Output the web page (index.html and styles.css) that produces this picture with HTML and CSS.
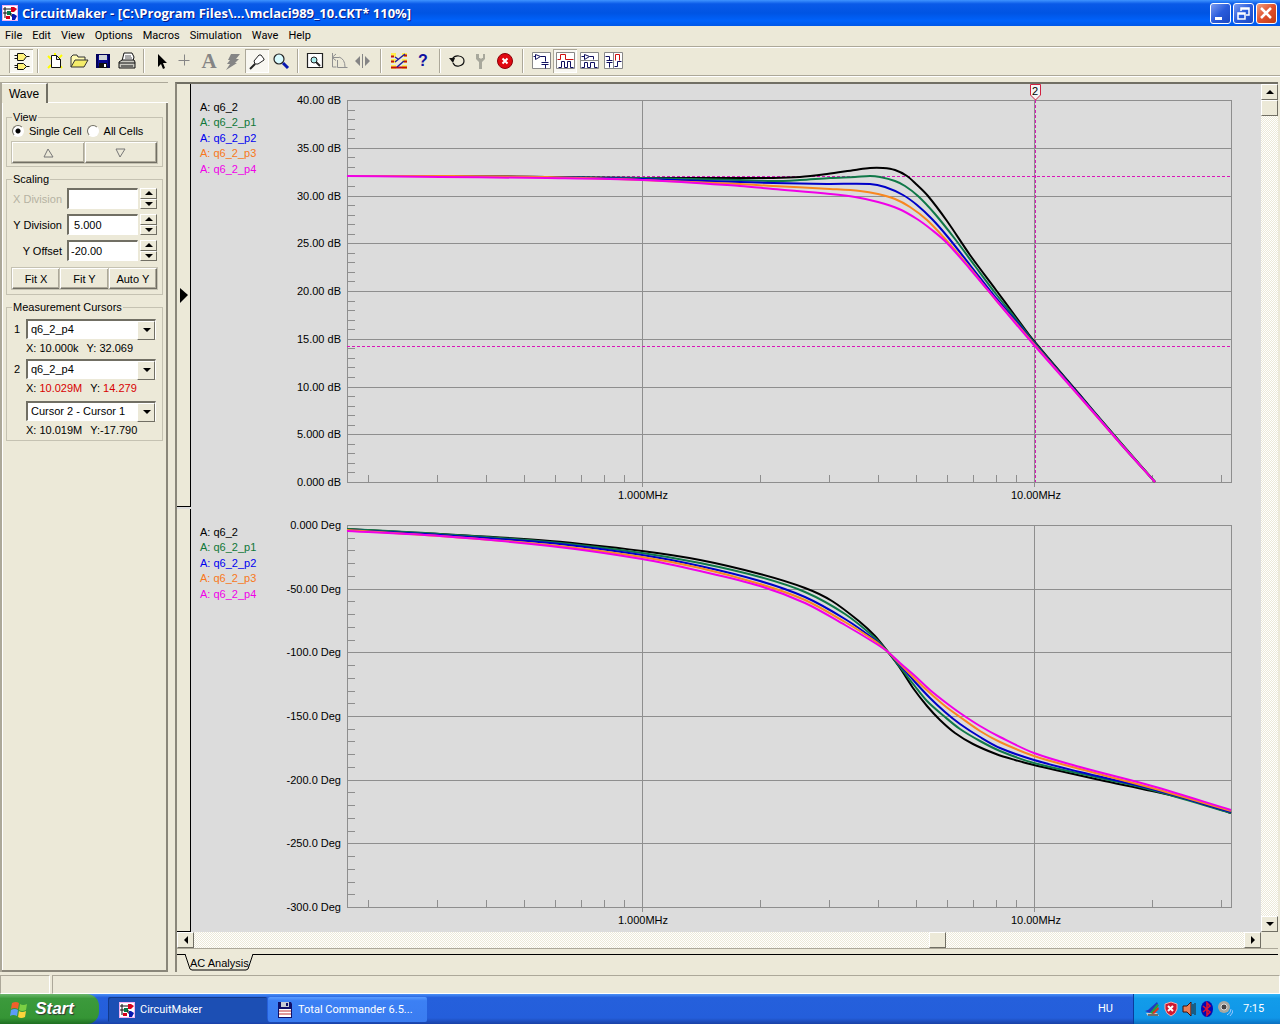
FILE: index.html
```html
<!DOCTYPE html>
<html lang="en">
<head>
    <meta charset="UTF-8">
    <meta name="viewport" content="width=device-width, initial-scale=1.0">
    <title>CircuitMaker</title>
    <link rel="stylesheet" href="styles.css">
</head>
<body>
    <!-- shared icons -->
    <svg class="defs" width="0" height="0" aria-hidden="true">
        <symbol id="app-icon" viewBox="0 0 16 16">
            <rect width="16" height="16" fill="#f0b0f0"/>
            <rect x="1" y="1" width="14" height="14" fill="#fff"/>
            <path d="M1 4h9M3 2v11M1 8h6" stroke="#111" fill="none"/>
            <path d="M9 2h3l3 2-3 3H9z" fill="#d8001c"/>
            <path d="M5 6h4v4H5z" fill="#087a48"/>
            <path d="M4 11h4v3H4z" fill="#d8001c"/>
            <path d="M9 8v3h2" stroke="#111" fill="none"/>
            <path d="M10 9h2l3 2-2 4h-3z" fill="#0818b0"/>
        </symbol>
        <symbol id="arrow-up" viewBox="0 0 8 4"><path d="M0 4l4-4 4 4z"/></symbol>
        <symbol id="arrow-down" viewBox="0 0 8 4"><path d="M0 0h8L4 4z"/></symbol>
    </svg>

    <header class="title-bar">
        <svg class="app-icon" width="16" height="16"><use href="#app-icon"/></svg>
        <h1>CircuitMaker - [C:\Program Files\...\mclaci989_10.CKT* 110%]</h1>
        <div class="window-buttons">
            <button aria-label="Minimize"><svg width="19" height="19"><path d="M4 13h7v3H4z" fill="#fff"/></svg></button>
            <button aria-label="Restore"><svg width="19" height="19"><path d="M7 7V4h8v7h-3M7 5h8M4 9h7v6H4zM4 10h7" fill="none" stroke="#fff" stroke-width="1.5"/></svg></button>
            <button class="close" aria-label="Close"><svg width="19" height="19"><path d="M4 4l10 10M14 4L4 14" stroke="#fff" stroke-width="2.5"/></svg></button>
        </div>
    </header>

    <nav class="menu-bar">
        <a href="#">File</a>
        <a href="#">Edit</a>
        <a href="#">View</a>
        <a href="#">Options</a>
        <a href="#">Macros</a>
        <a href="#">Simulation</a>
        <a href="#">Wave</a>
        <a href="#">Help</a>
    </nav>

    <div class="toolbar">
        <button class="pressed" aria-label="Parts">
            <svg width="24" height="24" viewBox="0.5 0.5 24 24"><path d="M9 5h6l3 3-3 4H9zM9 15h6l3 3-3 3H9z" fill="#fff27a" stroke="#111"/><path d="M6 7h3M6 10h3M18 8h3M6 17h3M6 19h3M18 18h3" stroke="#111"/></svg>
        </button>
        <span class="sep"></span>
        <button aria-label="New">
            <svg width="24" height="24"><path d="M5 7l3 3M5 19l3-3M12 4v2M19 6l-3 3M19 19l-3-3" stroke="#ff0" stroke-width="2"/><path d="M8.500 6.500h5l4 4v8h-9zM13.500 6.500v4h4" fill="#fff" stroke="#111"/></svg>
        </button>
        <button aria-label="Open">
            <svg width="24" height="24"><path d="M4 18V8l2-2h4l1 2h7v3" fill="#fffbb0" stroke="#333"/><path d="M4 18l4-7h13l-4 7z" fill="#f4ec6a" stroke="#333"/></svg>
        </button>
        <button aria-label="Save">
            <svg width="24" height="24"><path d="M6 6h12v12H6z" fill="#0a0a90" stroke="#00005a" stroke-width="2"/><path d="M8 6h8v5H8z" fill="#cfd4d8"/><path d="M8 14h8v5H8z" fill="#111"/><path d="M13 15h2v3h-2z" fill="#fff"/></svg>
        </button>
        <button aria-label="Print">
            <svg width="24" height="24"><path d="M7 12l2-8h8l2 4-1 4" fill="#fff" stroke="#111"/><path d="M10 7h6M10 9h7" stroke="#555"/><path d="M4 13l3-2h12l1 2v6H4z" fill="#c8c8c0" stroke="#111"/><path d="M4 14h16M6 17h12" stroke="#111"/></svg>
        </button>
        <span class="sep"></span>
        <button aria-label="Arrow">
            <svg width="24" height="24"><path d="M9 5v13l3-3 2 5 2-1-2-5h4z" fill="#000"/></svg>
        </button>
        <button aria-label="Wire">
            <svg width="24" height="24" viewBox="0.5 0.5 24 24"><path d="M6 12h11M12 6v11" stroke="#858585"/></svg>
        </button>
        <button aria-label="Text" class="text-tool">A</button>
        <button aria-label="Delete">
            <svg width="24" height="24"><path d="M10 5h9l-4 5h3l-4 4h2l-11 7 4-6H6l3-4H7z" fill="#858585"/></svg>
        </button>
        <button class="pressed" aria-label="Probe">
            <svg width="24" height="24"><path d="M5 20l5-5" stroke="#222" stroke-width="2"/><path d="M10 15l-1-3 5-6h2l3 4v1l-6 4z" fill="#fff" stroke="#222"/></svg>
        </button>
        <button aria-label="Zoom">
            <svg width="24" height="24"><circle cx="10" cy="10" r="5" fill="#d8fbff" stroke="#222" stroke-width="1.2"/><path d="M14 14l5 5" stroke="#0818b0" stroke-width="3"/></svg>
        </button>
        <span class="sep"></span>
        <button aria-label="Fit to window">
            <svg width="24" height="24"><path d="M4.500 4.500h15v14h-15z" fill="#fff" stroke="#222" stroke-width="1.2"/><circle cx="11" cy="11" r="3" fill="#aee" stroke="#222"/><path d="M13 13l4 4" stroke="#222" stroke-width="2"/></svg>
        </button>
        <button aria-label="Rotate">
            <svg width="24" height="24"><path d="M5.500 4v14h4M5 8.500h7M9 5L5 8.500l4 3M12 8q6 2 6 10M10.500 11v7.500h10" fill="none" stroke="#909090"/></svg>
        </button>
        <button aria-label="Mirror">
            <svg width="24" height="24"><path d="M9 7v10l-5-5zM14 7v10l5-5z" fill="#858585"/><path d="M11.500 5v14" stroke="#858585"/></svg>
        </button>
        <span class="sep wide"></span>
        <button aria-label="Simulation traces">
            <svg width="24" height="24"><path d="M4 6h5M4 12h5M4 18h5M15 6h5M15 12h5M15 18h5" stroke="#fff04c" stroke-width="4"/><path d="M4 7.500h3M4 12.500h3M4 18.500h14M17 6.500h3M17 12.500h3M17 18.500h3" stroke="#c01010" stroke-width="2"/><path d="M8 13l10-8M8 8l3 2M10 18l7-6" fill="none" stroke="#2020a0" stroke-width="1.5"/></svg>
        </button>
        <button aria-label="Help" class="help-tool">?</button>
        <span class="sep"></span>
        <button aria-label="Reset">
            <svg width="24" height="24"><path d="M7 10q3-4 7-3 5 1 5 5t-5 5q-4 1-6-3" fill="none" stroke="#111" stroke-width="1.2"/><path d="M4 9h6l-2 5z" fill="#111"/></svg>
        </button>
        <button aria-label="Setup">
            <svg width="24" height="24"><path d="M7 5v5l3 3v7h3v-7l3-3V5h-2v4h-1l-1 1-1-1h-1V5z" fill="#a8a89c"/></svg>
        </button>
        <button aria-label="Stop">
            <svg width="24" height="24"><circle cx="12" cy="12" r="7.500" fill="#e00810" stroke="#8a0008"/><path d="M9.500 9.500l5 5M14.500 9.500l-5 5" stroke="#fff" stroke-width="2"/></svg>
        </button>
        <span class="sep wide"></span>
        <button aria-label="Schematic">
            <svg width="24" height="24" viewBox="0.5 0.5 24 24"><path d="M4 4h18v16H4z" fill="#fff" stroke="#888"/><path d="M5 8h2m5 0h5v5M7 6v5l5-3zM13 14h7M13 16h7M17 16v4" fill="none" stroke="#101060"/></svg>
        </button>
        <button class="pressed" aria-label="Waveforms">
            <svg width="24" height="24" viewBox="0.5 0.5 24 24"><path d="M4 4h18v16H4z" fill="#fff" stroke="#888"/><path d="M5 11h3V6h5v5h8" fill="none" stroke="#d01010"/><path d="M6 19h3v-6h3v6h3v-6h3v6h3" fill="none" stroke="#101060"/></svg>
        </button>
        <button aria-label="Split horizontally">
            <svg width="24" height="24" viewBox="0.5 0.5 24 24"><path d="M4 4h18v16H4zM4 12h18" fill="#fff" stroke="#888"/><path d="M5 8h3m5 0h4v3M8 6v5l5-3zM5 19h3v-5h3v5h3v-5h4v5h3" fill="none" stroke="#101060"/></svg>
        </button>
        <button aria-label="Split vertically">
            <svg width="24" height="24" viewBox="0.5 0.5 24 24"><path d="M4 4h18v16H4zM13 4v16" fill="#fff" stroke="#888"/><path d="M5 8h4v4M6 12h6M6 14h6M9 14v5M14 18h3v-5h4" fill="none" stroke="#101060"/><path d="M15 12V6h4v6" fill="none" stroke="#d01010"/></svg>
        </button>
    </div>

    <main class="workspace">
        <aside class="sidebar">
            <div class="side-tabs"><button class="side-tab">Wave</button></div>
            <form class="side-page">
                <fieldset class="group view-group">
                    <legend>View</legend>
                    <div class="radios">
                        <label><input type="radio" name="cells" checked>Single Cell</label>
                        <label><input type="radio" name="cells">All Cells</label>
                    </div>
                    <div class="button-row">
                        <button type="button" aria-label="Previous cell"><svg width="11" height="10"><path d="M1 9l4-8 5 8z" fill="none" stroke="#777"/></svg></button>
                        <button type="button" aria-label="Next cell"><svg width="11" height="10"><path d="M1 1h9L5 9z" fill="none" stroke="#777"/></svg></button>
                    </div>
                </fieldset>

                <fieldset class="group scaling-group">
                    <legend>Scaling</legend>
                    <div class="field disabled">
                        <label for="xDivision">X Division</label>
                        <input type="text" id="xDivision" disabled>
                        <span class="spin">
                            <button type="button" aria-label="Increase X"><svg width="8" height="4"><use href="#arrow-up"/></svg></button>
                            <button type="button" aria-label="Decrease X"><svg width="8" height="4"><use href="#arrow-down"/></svg></button>
                        </span>
                    </div>
                    <div class="field">
                        <label for="yDivision">Y Division</label>
                        <input type="text" id="yDivision" value=" 5.000">
                        <span class="spin">
                            <button type="button" aria-label="Increase Y"><svg width="8" height="4"><use href="#arrow-up"/></svg></button>
                            <button type="button" aria-label="Decrease Y"><svg width="8" height="4"><use href="#arrow-down"/></svg></button>
                        </span>
                    </div>
                    <div class="field">
                        <label for="yOffset">Y Offset</label>
                        <input type="text" id="yOffset" value="-20.00">
                        <span class="spin">
                            <button type="button" aria-label="Increase offset"><svg width="8" height="4"><use href="#arrow-up"/></svg></button>
                            <button type="button" aria-label="Decrease offset"><svg width="8" height="4"><use href="#arrow-down"/></svg></button>
                        </span>
                    </div>
                    <div class="button-row">
                        <button type="button">Fit X</button>
                        <button type="button">Fit Y</button>
                        <button type="button">Auto Y</button>
                    </div>
                </fieldset>

                <fieldset class="group cursor-group">
                    <legend>Measurement Cursors</legend>
                    <div class="cursor-row">
                        <label for="cursor1">1</label>
                        <span class="select"><select id="cursor1"><option>q6_2_p4</option></select></span>
                    </div>
                    <p class="reading"><span>X: 10.000k</span><span>Y: 32.069</span></p>
                    <div class="cursor-row">
                        <label for="cursor2">2</label>
                        <span class="select"><select id="cursor2"><option>q6_2_p4</option></select></span>
                    </div>
                    <p class="reading"><span>X: <b>10.029M</b></span><span>Y: <b>14.279</b></span></p>
                    <div class="cursor-row difference">
                        <span class="select"><select aria-label="Cursor difference"><option>Cursor 2 - Cursor 1</option></select></span>
                    </div>
                    <p class="reading"><span>X: 10.019M</span><span>Y:-17.790</span></p>
                </fieldset>
            </form>
        </aside>

        <section class="wave-window">
            <div class="wave-view">
                <div class="cells">
                    <div class="cell gain">
                        <div class="cell-handle"><svg width="8" height="15"><path d="M0 0l8 7-8 8z"/></svg></div>
                        <svg class="plot" id="gain" viewBox="0 0 1070 425"></svg>
                    </div>
                    <div class="cell phase">
                        <div class="cell-handle"></div>
                        <svg class="plot" id="phase" viewBox="0 0 1070 423"></svg>
                    </div>
                </div>
                <div class="scrollbar vertical">
                    <button aria-label="Scroll up"><svg width="8" height="4"><use href="#arrow-up"/></svg></button>
                    <div class="track"><div class="thumb"></div></div>
                    <button aria-label="Scroll down"><svg width="8" height="4"><use href="#arrow-down"/></svg></button>
                </div>
            </div>
            <div class="scrollbar horizontal">
                <button aria-label="Scroll left"><svg width="4" height="8"><path d="M4 0v8L0 4z"/></svg></button>
                <div class="track"><div class="thumb"></div></div>
                <button aria-label="Scroll right"><svg width="4" height="8"><path d="M0 0v8l4-4z"/></svg></button>
            </div>
            <div class="sheet-tabs">
                <button class="sheet-tab">
                    <svg width="70" height="17"><path d="M0 0l5 15 2 1h54l2-1 5-15" fill="#ece9d8" stroke="#000"/></svg>
                    <span>AC Analysis</span>
                </button>
            </div>
        </section>
    </main>

    <div class="status-bar"><span></span><span></span></div>

    <footer class="taskbar">
        <button class="start">
            <svg width="20" height="20">
                <path d="M3 4q4-2 7 0L9 10q-4-2-7 0z" fill="#f0602c"/>
                <path d="M11 5q3 2 7 0l-1 6q-4 2-7 0z" fill="#7cd044"/>
                <path d="M2 11q4-2 7 0l-1 6q-4-2-7 0z" fill="#5c9cf8"/>
                <path d="M10 12q3 2 7 0l-1 6q-4 2-7 0z" fill="#fcd43c"/>
            </svg>
            Start
        </button>
        <div class="tasks">
            <button class="active"><svg width="16" height="16"><use href="#app-icon"/></svg>CircuitMaker</button>
            <button>
                <svg width="16" height="16"><path d="M1 0h13l1 2v14H1z" fill="#10106a"/><path d="M4 0h8v5H4z" fill="#c8ccd4"/><path d="M9 1h2v3H9z" fill="#10106a"/><path d="M2 7h12v8H2z" fill="#fff"/><path d="M2 9h12M2 12h12" stroke="#c03030"/></svg>
                Total Commander 6.5...
            </button>
        </div>
        <span class="language">HU</span>
        <div class="tray">
            <svg width="16" height="16"><path d="M1 12h11l2 3H3z" fill="#ccc"/><path d="M0 10l3-1 9-8 1 2-8 9z" fill="#2038c0"/><path d="M5 12l7-9 2 1-6 9z" fill="#20a040"/><path d="M7 12l6-6 1 2-5 5z" fill="#e03020"/><path d="M3 14h10" stroke="#111"/></svg>
            <svg width="16" height="16"><path d="M8 1l6 2v5q-1 5-6 7-5-2-6-7V3z" fill="#d01830" stroke="#f0b0b0"/><path d="M5 5l5 5M10 5l-5 5" stroke="#fff" stroke-width="2"/></svg>
            <svg width="16" height="16"><path d="M2 5h4l4-4v14l-4-4H2z" fill="#e88058" stroke="#401008"/><path d="M12 3v10M14 2v12" stroke="#222"/></svg>
            <svg width="16" height="16"><ellipse cx="8" cy="8" rx="6" ry="8" fill="#0808b0"/><path d="M4 5l7 6-3 3V2l3 3-7 6" fill="none" stroke="#e01030" stroke-width="1.600"/></svg>
            <svg width="16" height="16"><circle cx="7" cy="6" r="6" fill="#a8a8a0"/><circle cx="7" cy="6" r="3" fill="#444" stroke="#ddd"/><path d="M10 14q4-2 4-6M13 15q3-3 3-6" fill="none" stroke="#9cc8ff"/></svg>
            <time>7:15</time>
        </div>
    </footer>

    <script src="charts.js"></script>
</body>
</html>
```

FILE: styles.css
```css
* {
    box-sizing: border-box;
}

body {
    margin: 0;
    min-height: 100vh;
    display: flex;
    flex-direction: column;
    background: #ece9d8;
    color: #000;
    font-family: "Liberation Sans", Arial, sans-serif;
    font-size: 11px;
    line-height: 14px;
}

button,
input,
select {
    font: inherit;
    color: inherit;
    margin: 0;
    padding: 0;
    border-radius: 0;
}

button {
    display: flex;
    align-items: center;
    justify-content: center;
    background: none;
    border: none;
}

svg {
    display: block;
    flex: none;
}

.defs {
    position: absolute;
}

/* Title bar */
.title-bar {
    height: 26px;
    display: flex;
    align-items: center;
    padding: 0 3px 0 2px;
    background: linear-gradient(#3f94ff, #0a5ae8 15%, #0054e3 50%, #0062fb 80%, #0058e8);
}

.title-bar h1 {
    flex: 1;
    margin: 0 0 0 4px;
    color: #fff;
    font-family: "Open Sans", sans-serif;
    font-size: 13px;
    font-weight: 700;
    line-height: 18px;
    text-shadow: 1px 1px #0a1883;
    white-space: nowrap;
}

.window-buttons {
    display: flex;
    gap: 2px;
}

.window-buttons button {
    width: 21px;
    height: 21px;
    border: 1px solid #fff;
    border-radius: 3px;
    background: linear-gradient(135deg, #7c9cf0, #2a5cdc 50%, #1c48c0);
}

.window-buttons .close {
    background: linear-gradient(135deg, #f0a080, #e0502c 50%, #c03c14);
}

/* Menu and toolbar */
.menu-bar {
    height: 21px;
    display: flex;
    align-items: center;
    gap: 10px;
    padding: 0 5px;
    border-bottom: 1px solid #aca899;
    font-family: Roboto, sans-serif;
}

.menu-bar a {
    color: #000;
    text-decoration: none;
}

.toolbar {
    height: 29px;
    display: flex;
    align-items: center;
    padding: 0 0 2px 9px;
    border-top: 1px solid #fff;
    border-bottom: 1px solid #aca899;
    box-shadow: 0 1px #fff;
}

.toolbar button {
    width: 24px;
    height: 24px;
}

.toolbar .pressed {
    background: #f8f7f1;
    box-shadow: inset 1px 1px #aca899, inset -1px -1px #fff;
}

.toolbar .sep {
    width: 2px;
    height: 24px;
    margin: 0 4px;
    border-left: 1px solid #aca899;
    border-right: 1px solid #fff;
}

.toolbar .wide {
    margin: 0 5px;
}

.toolbar .text-tool {
    color: #858585;
    font-family: "Liberation Serif", serif;
    font-size: 21px;
    font-weight: 700;
}

.toolbar .help-tool {
    color: #1010a0;
    font-size: 16px;
    font-weight: 700;
}

/* Side panel */
.workspace {
    flex: 1;
    display: flex;
    gap: 7px;
    padding: 6px 2px 3px 0;
}

.sidebar {
    width: 168px;
    flex: none;
    display: flex;
    flex-direction: column;
    border-top: 1px solid #aca899;
    border-left: 2px solid #aca899;
}

.side-tabs {
    display: flex;
    height: 20px;
}

.side-tab {
    width: 46px;
    border-right: 2px solid #716f64;
    border-top: 1px solid #fff;
    font-size: 12px;
}

.side-page {
    flex: 1;
    padding: 7px 3px 0 4px;
    border-right: 2px solid #8a877a;
    border-bottom: 2px solid #8a877a;
    box-shadow: inset 1px 0 #fff;
}

.side-tabs::after {
    content: "";
    flex: 1;
    border-bottom: 1px solid #fff;
}

.group {
    min-width: 0;
    margin: 0 0 5px;
    padding: 0 5px;
    border: 1px solid #c5c2b2;
}

.group legend {
    padding: 0 1px;
    line-height: 14px;
}

.view-group {
    height: 57px;
}

.scaling-group {
    height: 123px;
}

.cursor-group {
    height: 141px;
}

.radios {
    display: flex;
    gap: 5px;
    height: 18px;
    align-items: center;
    padding-bottom: 4px;
    white-space: nowrap;
}

.radios label {
    display: flex;
    align-items: center;
    gap: 5px;
}

.radios input {
    appearance: none;
    width: 12px;
    height: 12px;
    border: 1px solid;
    border-color: #716f64 #fff #fff #716f64;
    border-radius: 50%;
    background: #fff;
}

.radios input:checked {
    background: radial-gradient(circle, #000 2px, #fff 3px);
}

.button-row {
    display: flex;
}

.button-row button {
    flex: 1;
    height: 21px;
    border: 1px solid;
    border-color: #fff #716f64 #716f64 #fff;
    box-shadow: inset -1px -1px #aca899, 0 0 0 1px #c5c2b2;
}

.field {
    display: flex;
    align-items: center;
    height: 21px;
    margin-bottom: 5px;
}

.scaling-group .field:first-of-type {
    margin-top: 2px;
}

.field label {
    width: 50px;
    margin-right: 5px;
    text-align: right;
    white-space: nowrap;
}

.disabled label {
    color: #b5b2a2;
}

.field input {
    width: 71px;
    height: 21px;
    padding: 0 2px;
    border: 1px solid;
    border-width: 2px 1px 1px 2px;
    border-color: #716f64 #fff #fff #716f64;
    background: #fff;
}

.spin {
    width: 17px;
    height: 21px;
    margin-left: 2px;
    display: flex;
    flex-direction: column;
}

.spin button {
    flex: 1;
    border: 1px solid;
    border-color: #fff #716f64 #716f64 #fff;
}

.scaling-group .button-row {
    margin-top: 7px;
}

.cursor-row {
    display: flex;
    align-items: center;
    height: 21px;
}

.cursor-group legend + .cursor-row {
    margin-top: 4px;
}

.cursor-row label {
    width: 14px;
    padding-left: 2px;
}

.difference {
    margin-top: 2px;
    padding-left: 14px;
}

.select {
    position: relative;
    width: 130px;
    height: 20px;
}

.select select {
    appearance: none;
    width: 100%;
    height: 20px;
    padding-left: 3px;
    border: 1px solid;
    border-width: 2px 1px 1px 2px;
    border-color: #716f64 #fff #fff #716f64;
    background: #fff;
}

/* drop-down arrow over the select */
.select::before {
    content: "";
    position: absolute;
    top: 2px;
    right: 1px;
    width: 16px;
    height: 17px;
    border: 1px solid;
    border-color: #fff #716f64 #716f64 #fff;
    background: #ece9d8;
    pointer-events: none;
}

.select::after {
    content: "";
    position: absolute;
    top: 9px;
    right: 5px;
    border: 4px solid transparent;
    border-top-color: #000;
    border-bottom: none;
    pointer-events: none;
}

.reading {
    display: flex;
    gap: 8px;
    height: 19px;
    margin: 0;
    padding: 2px 0 0 14px;
    line-height: 14px;
    white-space: nowrap;
}

.reading b {
    font-weight: 400;
    color: #d80000;
}

/* Wave window */
.wave-window {
    flex: 1;
    min-width: 0;
    display: flex;
    flex-direction: column;
    border-left: 2px solid #8a877a;
    border-top: 2px solid #716f64;
}

.wave-view {
    flex: 1;
    display: flex;
}

.cells {
    flex: 1;
    min-width: 0;
    display: flex;
    flex-direction: column;
    background: #dcdcdc;
}

.cell {
    display: flex;
    min-height: 0;
}

.gain {
    flex: 425 0 0;
}

.phase {
    flex: 423 0 0;
}

.cell-handle {
    width: 14px;
    flex: none;
    display: flex;
    align-items: center;
    justify-content: center;
    border-right: 1px solid #000;
    border-bottom: 1px solid #000;
    background: #ece9d8;
}

.gain .cell-handle {
    margin-bottom: 2px;
}

.plot {
    flex: 1;
    min-width: 0;
    width: 100%;
    height: 100%;
    font-size: 11px;
}

.grid {
    fill: none;
    stroke: #8e8e8e;
    shape-rendering: crispEdges;
}

.curve {
    fill: none;
    stroke-width: 2;
}

.cursor {
    fill: none;
    stroke: #d818b8;
    stroke-dasharray: 3 2;
}

.cursor-flag {
    fill: #f4f4f4;
    stroke: #d02040;
}

.scrollbar {
    display: flex;
    flex: none;
}

.scrollbar button,
.thumb {
    width: 17px;
    height: 16px;
    flex: none;
    border: 1px solid;
    border-color: #fff #716f64 #716f64 #fff;
    background: #ece9d8;
}

.track {
    flex: 1;
    background: repeating-conic-gradient(#fff 0 25%, #ece9d8 0 50%) 0 0 / 2px 2px;
}

.vertical {
    width: 17px;
    flex-direction: column;
}

.horizontal {
    margin-right: 17px;
    height: 16px;
}

.horizontal .thumb {
    margin-left: 70%;
}

.sheet-tabs {
    height: 24px;
    padding: 5px 0 0 8px;
    border-top: 1px solid #aca899;
    background: linear-gradient(#000, #000) 0 5px / 100% 1px no-repeat;
}

.sheet-tab {
    position: relative;
    width: 70px;
    height: 17px;
    justify-content: flex-start;
    padding-left: 5px;
}

.sheet-tab svg {
    position: absolute;
    inset: 0;
}

.sheet-tab span {
    position: relative;
    white-space: nowrap;
}

/* Status bar */
.status-bar {
    height: 19px;
    display: flex;
    gap: 2px;
}

.status-bar span {
    flex: 1;
    border: 1px solid;
    border-color: #aca899 #fff #fff #aca899;
}

.status-bar span:first-child {
    flex: none;
    width: 50px;
}

/* Taskbar */
.taskbar {
    height: 30px;
    display: flex;
    align-items: stretch;
    color: #fff;
    font-family: Roboto, sans-serif;
    background: linear-gradient(#4a90f8, #2560dc 12%, #245edb 80%, #1941a5);
}

.start {
    width: 99px;
    gap: 6px;
    padding-right: 16px;
    border-radius: 0 12px 12px 0;
    background: linear-gradient(#6cb86c, #3c9a3c 15%, #359535 80%, #1e6e20);
    font-family: "Liberation Sans", sans-serif;
    font-size: 17px;
    font-style: italic;
    font-weight: 700;
    text-shadow: 1px 1px 1px #333;
}

.tasks {
    flex: 1;
    display: flex;
    gap: 1px;
    padding: 3px 0 2px 9px;
}

.tasks button {
    width: 159px;
    gap: 5px;
    padding-left: 9px;
    justify-content: flex-start;
    border-radius: 2px;
    background: linear-gradient(#5a9cff, #3c80f4 15%, #3a7cf0);
    white-space: nowrap;
}

.tasks .active {
    background: #1c4fb4;
    box-shadow: inset 1px 1px #123a8c;
    padding-left: 11px;
}

.language {
    width: 35px;
    line-height: 29px;
}

.tray {
    width: 147px;
    display: flex;
    align-items: center;
    gap: 2px;
    padding-left: 11px;
    border-left: 1px solid #0a3c9c;
    background: linear-gradient(#30b4f8, #129cea 15%, #1096e8 80%, #0c70c0);
}

.tray time {
    margin-left: 8px;
}
```

FILE: charts.js
```js
// Both cells share the frequency axis; coordinates are relative to the plot's top left.
const WIDTH = 884;
const HEIGHT = 382;
const DECADE = 392;
const COLORS = ['#000000', '#107848', '#0000c8', '#f88820', '#f000e8'];
const NAMES = ['q6_2', 'q6_2_p1', 'q6_2_p2', 'q6_2_p3', 'q6_2_p4'];
const LEGEND_COLORS = ['#000000', '#107838', '#0000f0', '#f87820', '#f000e8'];

const gain = [
    [[0, 76], [93, 76], [200, 77], [295, 78], [393, 78], [426, 78], [453, 77], [480, 74], [508, 70], [523, 68], [536, 68], [548, 70], [560, 76], [569, 84], [581, 96], [600, 121], [623, 155], [649, 190], [669, 217], [687, 241], [733, 295], [773, 342], [808, 382]],
    [[0, 76], [93, 76], [200, 77], [295, 78], [393, 80], [426, 81], [453, 80], [483, 78], [508, 77], [523, 76], [533, 77], [548, 81], [558, 86], [571, 96], [588, 114], [608, 139], [628, 166], [649, 194], [669, 219], [687, 242], [733, 296], [773, 342], [808, 382]],
    [[0, 76], [93, 76], [200, 77], [295, 79], [393, 82], [426, 83], [480, 84], [523, 84], [538, 87], [556, 95], [570, 105], [585, 119], [600, 136], [623, 165], [649, 198], [669, 221], [687, 243], [733, 296], [773, 343], [808, 382]],
    [[0, 76], [93, 76], [200, 77], [295, 80], [393, 84], [426, 86], [483, 89], [513, 91], [531, 94], [548, 99], [563, 107], [580, 120], [600, 141], [623, 168], [649, 200], [669, 223], [687, 244], [733, 297], [773, 343], [808, 382]],
    [[0, 76], [93, 77], [200, 78], [295, 80], [393, 86], [426, 89], [483, 94], [508, 97], [531, 102], [552, 109], [570, 119], [585, 130], [600, 143], [623, 169], [649, 200], [669, 224], [687, 245], [733, 297], [773, 343], [808, 382]]
];

const phase = [
    [[0, 4], [93, 9], [203, 16], [295, 26], [353, 35], [413, 49], [458, 63], [485, 76], [513, 97], [528, 111], [541, 127], [553, 143], [566, 163], [580, 181], [593, 195], [608, 208], [626, 219], [649, 229], [668, 235], [687, 240], [713, 246], [753, 255], [805, 266], [843, 275], [884, 288]],
    [[0, 4], [93, 9], [203, 17], [295, 28], [353, 38], [413, 52], [458, 67], [498, 89], [528, 113], [541, 127], [553, 142], [567, 160], [580, 176], [598, 192], [613, 204], [633, 216], [653, 226], [687, 238], [753, 253], [805, 265], [884, 288]],
    [[0, 5], [93, 10], [203, 18], [295, 30], [353, 41], [413, 56], [458, 72], [498, 94], [528, 115], [541, 127], [553, 140], [568, 157], [583, 173], [598, 187], [613, 199], [633, 212], [653, 223], [687, 235], [733, 247], [805, 264], [884, 287]],
    [[0, 5], [93, 11], [203, 20], [295, 32], [353, 43], [413, 59], [458, 75], [498, 97], [528, 116], [541, 127], [553, 139], [568, 154], [583, 168], [598, 181], [613, 192], [633, 206], [653, 217], [687, 231], [733, 244], [805, 263], [884, 286]],
    [[0, 6], [93, 11], [203, 21], [295, 34], [353, 46], [413, 61], [458, 78], [498, 100], [528, 118], [541, 127], [553, 138], [568, 151], [583, 165], [598, 177], [613, 188], [633, 201], [653, 212], [687, 228], [733, 242], [805, 261], [884, 285]]
];

// Smooth path through the samples
function curve(points) {
    let d = `M${points[0]}`;
    for (let i = 0; i < points.length - 1; i++) {
        const p0 = points[i - 1] || points[i];
        const p1 = points[i];
        const p2 = points[i + 1];
        const p3 = points[i + 2] || p2;
        const step = (p2[0] - p1[0]) / 3;
        const m1 = (p2[1] - p0[1]) / (p2[0] - p0[0]);
        const m2 = (p3[1] - p1[1]) / (p3[0] - p1[0]);
        d += `C${p1[0] + step} ${p1[1] + m1 * step} ${p2[0] - step} ${p2[1] - m2 * step} ${p2[0]} ${p2[1]}`;
    }
    return d;
}

function grid(divisions) {
    let d = `M0 0H${WIDTH}V${HEIGHT}H0z`;
    for (let i = 0; i < divisions * 5; i++) {
        const y = Math.round(i * HEIGHT / (divisions * 5));
        d += `M0 ${y}H${i % 5 ? 8 : WIDTH}`;
    }
    for (let decade = -1; decade < 2; decade++) {
        for (let n = 1; n < 10; n++) {
            const x = Math.round(295 + DECADE * (decade + Math.log10(n)));
            if (x > 0 && x < WIDTH) {
                d += n === 1 ? `M${x} 0V${HEIGHT + 5}` : `M${x} ${HEIGHT - 7}V${HEIGHT}`;
            }
        }
    }
    return `<path class="grid" d="${d}"/>`;
}

function draw(id, series, labels, extra) {
    let out = grid(labels.length - 1);
    labels.forEach((label, i) => {
        const y = Math.round(i * HEIGHT / (labels.length - 1)) + 4;
        out += `<text x="-6" y="${y}" text-anchor="end">${label}</text>`;
    });
    out += `<text x="296" y="399" text-anchor="middle">1.000MHz</text>`;
    out += `<text x="689" y="399" text-anchor="middle">10.00MHz</text>`;
    NAMES.forEach((name, i) => {
        out += `<text x="-147" y="${11 + Math.floor(i * 15.5)}" fill="${LEGEND_COLORS[i]}">A: ${name}</text>`;
    });
    out += extra;
    series.forEach((points, i) => {
        out += `<path class="curve" stroke="${COLORS[i]}" d="${curve(points)}"/>`;
    });
    document.getElementById(id).innerHTML = `<g transform="translate(156 16)">${out}</g>`;
}

draw('gain', gain,
    ['40.00 dB', '35.00 dB', '30.00 dB', '25.00 dB', '20.00 dB', '15.00 dB', '10.00 dB', '5.000 dB', '0.000 dB'],
    `<path class="cursor" d="M0 76.5H${WIDTH}M0 246.5H${WIDTH}M688.5 0V${HEIGHT}"/>
     <path class="cursor-flag" d="M683.5 -15.5H693.5V-5L688.5 0L683.5 -5z"/>
     <text x="688" y="-5" text-anchor="middle">2</text>`);

draw('phase', phase,
    ['0.000 Deg', '-50.00 Deg', '-100.0 Deg', '-150.0 Deg', '-200.0 Deg', '-250.0 Deg', '-300.0 Deg'],
    '');
```
